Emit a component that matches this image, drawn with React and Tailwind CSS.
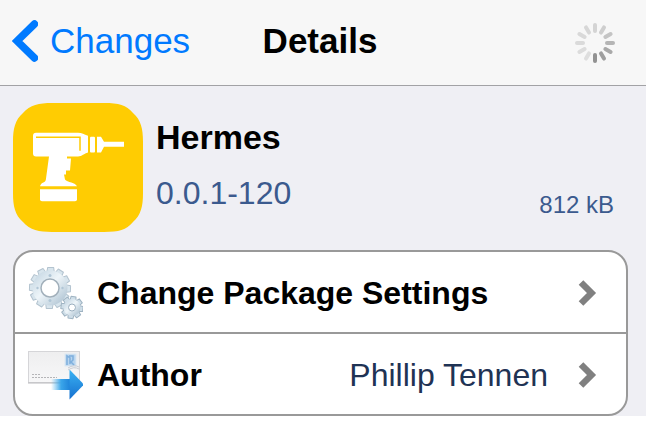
const SPOKES = [
  '#d4d4d4', '#cecece', '#c4c4c4', '#b5b5b5', '#a9a9a9', '#9e9e9e',
  '#929292', '#dedede', '#dcdcdc', '#dadada', '#d9d9d9', '#d7d7d7',
];

const TEETH = [0, 30, 60, 90, 120, 150, 180, 210, 240, 270, 300, 330];
const SMALL_TEETH = [0, 45, 90, 135, 180, 225, 270, 315];

function Spinner() {
  return (
    <svg role="img" aria-label="Loading" className="size-[42px]" viewBox="0 0 42 42">
      {SPOKES.map((color, i) => (
        <line
          key={i}
          x1="21"
          y1="3"
          x2="21"
          y2="9"
          stroke={color}
          strokeWidth="4"
          strokeLinecap="round"
          transform={`rotate(${i * 30} 21 21)`}
        />
      ))}
    </svg>
  );
}

function DrillIcon() {
  return (
    <svg
      aria-hidden="true"
      className="h-[129px] w-[130px] shrink-0"
      viewBox="0 0 130 130"
      preserveAspectRatio="none"
    >
      <path
        fill="#ffcc02"
        d="M39 0H91C106 0 113 2 120 10C128 17 130 26 130 39V91C130 104 128 113 120 120C113 128 106 130 91 130H39C26 130 17 128 10 120C2 113 0 104 0 91V39C0 26 2 17 10 10C17 2 26 0 39 0Z"
      />
      <g fill="#fff">
        <path d="M23 30H65C69 30 71 32 75 33V50C71 51 69 54 65 54H54V56H58L57 68H53V72H51L52 77C54 80 63 80 64 84H27C28 79 33 81 33 76L36 54H23Q20 54 20 51V33Q20 30 23 30Z" />
        <path d="M27 87H64V97Q64 99 62 99H29Q27 99 27 97Z" />
        <rect x="77" y="34" width="5" height="16" rx="1" />
        <path d="M84 34H88L91 39H111V44H91L88 50H84Z" />
      </g>
      <path d="M23 34.500H67V48" fill="none" stroke="#ffcc02" strokeWidth="1.500" />
    </svg>
  );
}

function GearsIcon() {
  return (
    <svg aria-hidden="true" className="h-[54px] w-14 shrink-0" viewBox="0 0 56 54">
      <defs>
        <linearGradient id="steel" x1="0" y1="0" x2="1" y2="1">
          <stop offset="0" stopColor="#cbdbe6" />
          <stop offset="0.450" stopColor="#eef5f9" />
          <stop offset="1" stopColor="#b6c9d7" />
        </linearGradient>
      </defs>
      <g stroke="#b3c3cf" strokeWidth="1" strokeLinejoin="round" fill="#d8e5ed">
        {TEETH.map((a) => (
          <path key={a} d="M19 8L20 1.500H26L27 8Z" transform={`rotate(${a + 2} 23 22)`} />
        ))}
      </g>
      <circle cx="23" cy="22" r="13" fill="none" stroke="url(#steel)" strokeWidth="9" />
      <circle cx="23" cy="22" r="9" fill="#fff" stroke="#a2b0bb" strokeWidth="1.500" />
      <g fill="#b0c6d6">
        <circle cx="23" cy="9.500" r="1.500" />
        <circle cx="23" cy="34.500" r="1.500" />
        <circle cx="10.500" cy="22" r="1.200" />
        <circle cx="35.500" cy="22" r="1.200" />
      </g>
      <g stroke="#9fb3c2" strokeWidth="1" strokeLinejoin="round" fill="#cfdee8">
        {SMALL_TEETH.map((a) => (
          <path key={a} d="M42 35L42.500 30.500H47.500L48 35Z" transform={`rotate(${a + 8} 45 41.500)`} />
        ))}
      </g>
      <circle cx="45" cy="41.500" r="6" fill="none" stroke="url(#steel)" strokeWidth="5" />
      <circle cx="45" cy="41.500" r="3.500" fill="#fff" stroke="#9aafbf" strokeWidth="1" />
    </svg>
  );
}

function MailIcon() {
  return (
    <svg aria-hidden="true" className="h-[54px] w-14 shrink-0" viewBox="0 0 56 54">
      <defs>
        <linearGradient id="paper" x1="0" y1="0" x2="0" y2="1">
          <stop offset="0" stopColor="#eeeeef" />
          <stop offset="1" stopColor="#f7f7f8" />
        </linearGradient>
        <linearGradient id="shaft" x1="0" y1="0" x2="1" y2="0">
          <stop offset="0" stopColor="#54b5ee" stopOpacity="0" />
          <stop offset="0.500" stopColor="#3ba6ea" />
          <stop offset="1" stopColor="#1c80d8" />
        </linearGradient>
        <linearGradient id="head" x1="0" y1="0" x2="0" y2="1">
          <stop offset="0" stopColor="#3ab2f3" />
          <stop offset="1" stopColor="#1670cf" />
        </linearGradient>
      </defs>
      <rect x="1.500" y="3.500" width="51" height="31" fill="url(#paper)" stroke="#d5d5d8" />
      <path d="M1 35H53" stroke="#b9b9bd" />
      <rect x="38" y="6" width="11" height="12" fill="#b8d5ef" stroke="#dce7f2" />
      <path d="M40 17V8L43 10V16M42 8H46V12L44 14L47 17" fill="none" stroke="#7fafdd" strokeWidth="1.500" />
      <path d="M41 20Q47 16 52 19M41 22Q47 18 52 21" fill="none" stroke="#c9ccd3" />
      <path d="M5 26.500H13M5 29.500H30" stroke="#b5b5b8" strokeDasharray="2 1" />
      <rect x="24" y="31" width="20" height="11" fill="url(#shaft)" />
      <path d="M42.500 21.500L57 36.500L42.500 51.500Z" fill="url(#head)" />
    </svg>
  );
}

function Chevron() {
  return (
    <svg aria-hidden="true" className="h-7 w-5 shrink-0" viewBox="0 0 20 28">
      <path d="M3 3.500L13.500 14L3 24.500" fill="none" stroke="#808080" strokeWidth="6.500" />
    </svg>
  );
}

export default function App() {
  return (
    <div className="bg-white font-['Liberation_Sans',Arial,sans-serif] text-black">
      <header className="grid h-[86px] grid-cols-[1fr_auto_1fr] items-center border-b border-[#a2a2a5] bg-[#f7f7f7] pr-[18px] pb-1 pl-3">
        <button type="button" className="flex items-center gap-3 text-[35px] leading-10 text-[#007aff]">
          <svg aria-hidden="true" className="h-[42px] w-[26px]" viewBox="0 0 26 42">
            <path d="M22.500 4L5 21L22.500 38" fill="none" stroke="currentColor" strokeWidth="7.500" strokeLinecap="round" />
          </svg>
          Changes
        </button>
        <h1 className="text-[35px] leading-10 font-bold">Details</h1>
        <div className="flex justify-end pt-1 pr-3">
          <Spinner />
        </div>
      </header>

      <main className="bg-[#efeff4] pt-[17px] pr-[18px] pl-[13px]">
        <section className="flex gap-[13px]">
          <DrillIcon />
          <div className="flex grow flex-col gap-4 pt-[14px]">
            <h2 className="text-[34px] leading-10 font-bold">Hermes</h2>
            <div className="flex items-start justify-between pr-[14px] text-[#3b5a8e]">
              <span className="text-[32px] leading-10">0.0.1-120</span>
              <span className="pt-4 text-2xl leading-8">812 kB</span>
            </div>
          </div>
        </section>

        <ul className="mt-[18px] overflow-hidden rounded-[20px] border-2 border-[#999] bg-white">
          <li className="border-b-2 border-[#999]">
            <button type="button" className="flex h-20 w-full items-center pt-0.5 pr-7 pl-3 text-left text-[32px] leading-10">
              <GearsIcon />
              <span className="grow pl-[14px] font-bold">Change Package Settings</span>
              <Chevron />
            </button>
          </li>
          <li>
            <button type="button" className="flex h-20 w-full items-center pt-0.5 pr-7 pl-3 text-left text-[32px] leading-10">
              <MailIcon />
              <span className="grow pl-[14px] font-bold">Author</span>
              <span className="pr-[30px] text-[#1f3354]">Phillip Tennen</span>
              <Chevron />
            </button>
          </li>
        </ul>
      </main>
    </div>
  );
}
